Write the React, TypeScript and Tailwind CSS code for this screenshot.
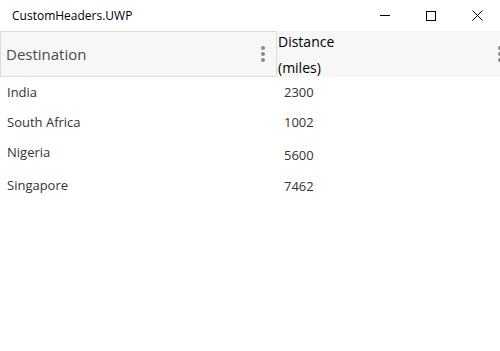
import React from "react";

const Dots = () => (
  <div className="flex flex-col gap-[2px]">
    <span className="block w-[4px] h-[4px] rounded-full bg-[#8a8a8a]" />
    <span className="block w-[4px] h-[4px] rounded-full bg-[#8a8a8a]" />
    <span className="block w-[4px] h-[4px] rounded-full bg-[#8a8a8a]" />
  </div>
);

const rows = [
  { d: "India", m: "2300", h: "h-[30px]", pt: "pt-[5px]", mpt: "pt-[5px]" },
  { d: "South Africa", m: "1002", h: "h-[30px]", pt: "pt-[5px]", mpt: "pt-[5px]" },
  { d: "Nigeria", m: "5600", h: "h-[32px]", pt: "pt-[5px]", mpt: "pt-[8px]" },
  { d: "Singapore", m: "7462", h: "h-[32px]", pt: "pt-[6px]", mpt: "pt-[7px]" },
];

export default function App() {
  return (
    <div className="w-[500px] h-[351px] bg-white overflow-hidden" style={{ fontFamily: '"Segoe UI", "Open Sans", "Noto Sans", sans-serif' }}>
      <div className="h-[31px] flex items-center">
        <div className="pl-[12px] text-[12px] text-black flex-1">CustomHeaders.UWP</div>
        <div className="flex items-center h-full">
          <div className="w-[46px] h-full flex items-center justify-center">
            <div className="w-[10px] h-[1px] bg-black" />
          </div>
          <div className="w-[46px] h-full flex items-center justify-center">
            <div className="w-[10px] h-[10px] border border-black" />
          </div>
          <div className="w-[46px] h-full flex items-center justify-center">
            <svg width="11" height="11" viewBox="0 0 11 11"><path d="M0.5 0.5 L10.5 10.5 M10.5 0.5 L0.5 10.5" stroke="black" strokeWidth="1" /></svg>
          </div>
        </div>
      </div>
      <div className="flex h-[46px]">
        <div className="w-[277px] h-full bg-[#f7f7f7] border border-[#dcdcdc] flex items-center justify-between pl-[5px] pr-[11px]">
          <span className="text-[15px] text-[#4a4a4a]">Destination</span>
          <Dots />
        </div>
        <div className="flex-1 h-full bg-[#f7f7f7] flex items-center justify-between pl-[1px] pr-0 relative">
          <div className="flex flex-col text-[14px] text-black leading-[26px] mt-[1px]">
            <span>Distance</span>
            <span>(miles)</span>
          </div>
          <div className="mr-[-2px]"><Dots /></div>
        </div>
      </div>
      <div className="flex flex-col pt-[1px]">
        {rows.map((r) => (
          <div key={r.d} className={`flex ${r.h}`}>
            <div className={`w-[277px] pl-[7px] ${r.pt} text-[13px] text-[#333]`}>{r.d}</div>
            <div className={`pl-[7px] ${r.mpt} text-[13px] text-[#333]`}>{r.m}</div>
          </div>
        ))}
      </div>
    </div>
  );
}
